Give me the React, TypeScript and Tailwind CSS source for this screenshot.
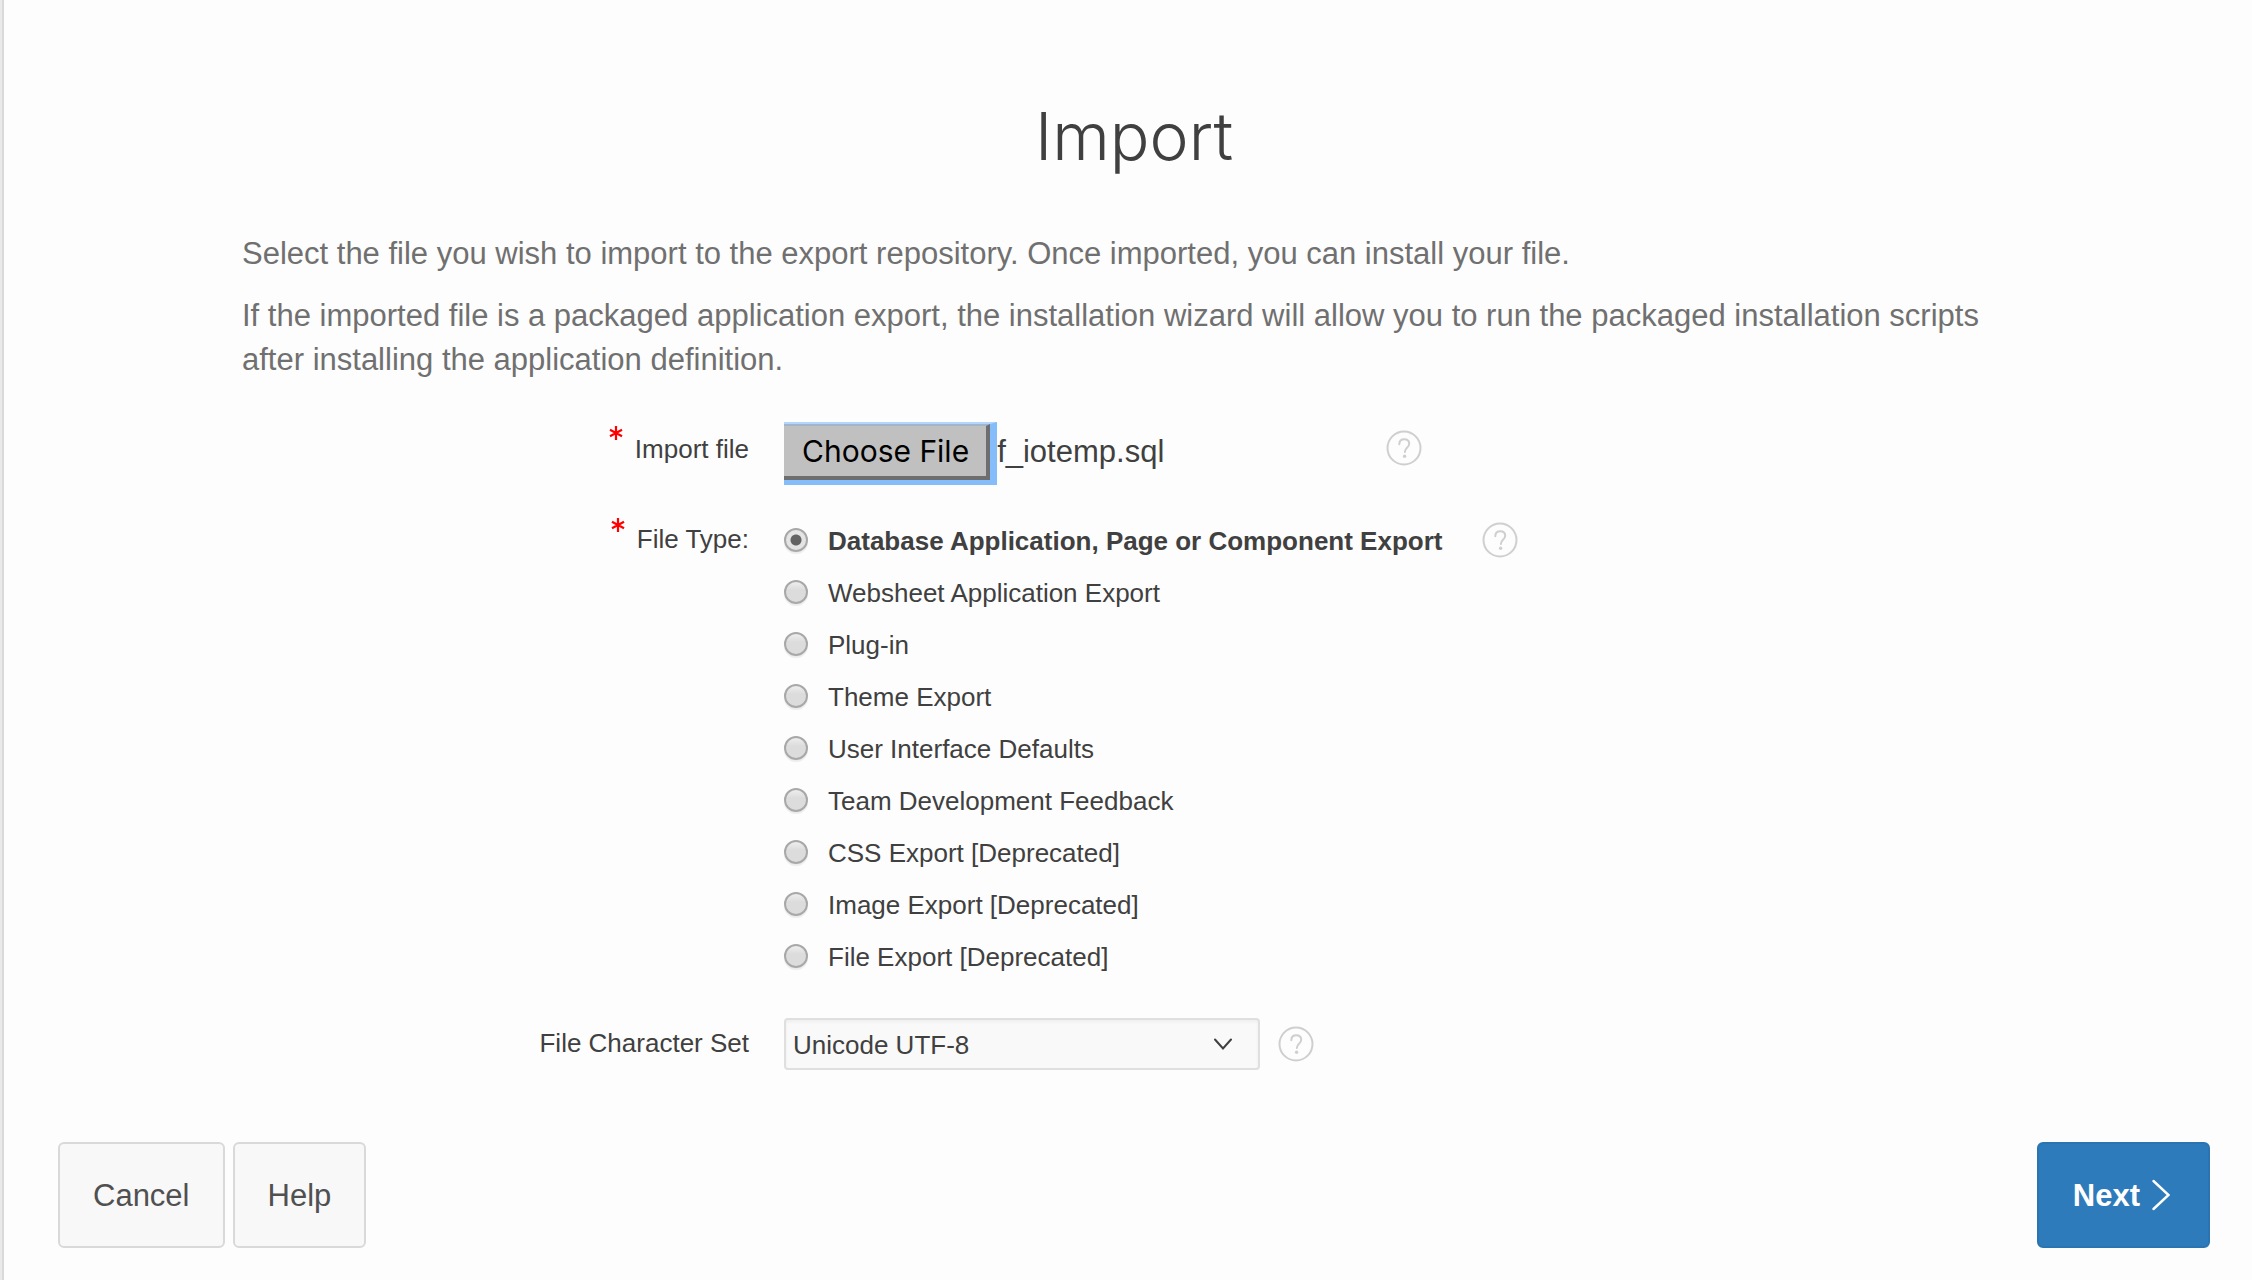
import { useState } from "react";

const fileTypes = [
  "Database Application, Page or Component Export",
  "Websheet Application Export",
  "Plug-in",
  "Theme Export",
  "User Interface Defaults",
  "Team Development Feedback",
  "CSS Export [Deprecated]",
  "Image Export [Deprecated]",
  "File Export [Deprecated]",
];

function HelpButton({ label }: { label: string }) {
  return (
    <button type="button" aria-label={label} className="shrink-0 text-[#cfcfcf]">
      <svg className="size-9" viewBox="0 0 36 36" fill="none" stroke="currentColor" strokeWidth="2">
        <circle cx="18" cy="18" r="16.5" />
        <path
          d="M13.3 14.2c0-3 2.1-4.9 5-4.9s4.9 1.8 4.9 4.5c0 2-1.1 3.1-2.4 4.300-1.2 1.1-1.900 1.900-1.900 3.900"
          strokeLinecap="round"
        />
        <circle cx="18.6" cy="26.3" r="1.7" fill="currentColor" stroke="none" />
      </svg>
    </button>
  );
}

function Required() {
  return (
    <svg
      aria-hidden="true"
      className="mt-1 size-3.5 shrink-0 self-start text-[#ff0000]"
      viewBox="0 0 14 14"
      stroke="currentColor"
      strokeWidth="2.2"
    >
      <path d="M7 0v14M1 3.7l12 6.6M13 3.7L1 10.3" />
    </svg>
  );
}

export default function App() {
  const [fileType, setFileType] = useState(fileTypes[0]);
  const [fileName, setFileName] = useState("f_iotemp.sql");

  return (
    <div className="min-h-screen border-l-2 border-[#e9e9e9] bg-[#fdfdfd] font-['Liberation_Sans',Arial,sans-serif] text-[#404040]">
      <form
        onSubmit={(event) => event.preventDefault()}
        className="flex min-h-screen flex-col justify-between border-l-2 border-[#d9d9d9] pt-24 pr-[42px] pb-8 pl-[54px]"
      >
        <main>
          <h1 className="pt-1 text-center font-['Inter',sans-serif] text-[66px] leading-[72px] font-light">Import</h1>
          <div className="mt-[60px] space-y-[18px] px-[184px] text-[31px] leading-[44px] text-[#707070]">
            <p>Select the file you wish to import to the export repository. Once imported, you can install your file.</p>
            <p>
              If the imported file is a packaged application export, the installation wizard will allow you to run the
              packaged installation scripts after installing the application definition.
            </p>
          </div>

          <div className="mt-10 grid grid-cols-[691px_1fr] gap-x-[35px] text-[26px]">
            <div className="flex h-[62px] justify-end gap-3 leading-[54px]">
              <Required />
              <label htmlFor="import-file">Import file</label>
            </div>
            <div className="flex h-[62px] items-start">
              <input
                id="import-file"
                type="file"
                className="sr-only"
                onChange={(event) => setFileName(event.target.files?.[0]?.name ?? "")}
              />
              <label
                htmlFor="import-file"
                className="flex border-t-2 border-r-[7px] border-b-[5px] border-t-[#b5d6fb] border-r-[#85bdfb] border-b-[#85bdfb]"
              >
                <span className="border-t-2 border-r-4 border-b-4 border-t-[#9fb6cd] border-r-[#6e6e6e] border-b-[#6e6e6e] bg-[#c0c0c0] pr-[17px] pl-[18px] font-['Inter',sans-serif] text-[30px] leading-[50px] text-black">
                  Choose File
                </span>
              </label>
              <span className="w-[389px] text-[31px] leading-[60px]">{fileName}</span>
              <div className="mt-2">
                <HelpButton label="Help for Import file" />
              </div>
            </div>

            <div id="file-type-label" className="mt-[30px] flex justify-end gap-3 leading-[50px]">
              <Required />
              <span>File Type:</span>
            </div>
            <div className="mt-[30px] flex items-start gap-10">
              <div role="radiogroup" aria-labelledby="file-type-label">
                {fileTypes.map((name) => (
                  <label key={name} className="flex h-[52px] items-center gap-5 has-checked:font-bold">
                    <input
                      type="radio"
                      name="file-type"
                      checked={fileType === name}
                      onChange={() => setFileType(name)}
                      className="size-6 shrink-0 appearance-none rounded-full border-2 border-[#a8a8a8] bg-linear-to-b from-[#eeeeee] to-[#dcdcdc] to-40% shadow-[0_2px_1px_#ececec] checked:bg-[radial-gradient(circle,#636363_5px,#e4e4e4_6px)]"
                    />
                    <span className="pt-0.5">{name}</span>
                  </label>
                ))}
              </div>
              <div className="mt-2">
                <HelpButton label="Help for File Type" />
              </div>
            </div>

            <label htmlFor="charset" className="mt-9 text-right leading-[50px]">
              File Character Set
            </label>
            <div className="mt-9 flex items-center gap-[18px]">
              <div className="relative w-[476px]">
                <select
                  id="charset"
                  className="h-[52px] w-full appearance-none rounded border-2 border-[#dfdfdf] bg-[#f9f9f9] pt-0.5 pr-14 pl-[7px] text-[26px] shadow-[inset_0_2px_3px_#efefef]"
                >
                  <option>Unicode UTF-8</option>
                </select>
                <svg
                  className="pointer-events-none absolute top-5 right-7 h-3 w-[18px]"
                  viewBox="0 0 18 12"
                  fill="none"
                  stroke="#404040"
                  strokeWidth="2"
                  strokeLinecap="round"
                >
                  <path d="M1 1.5l8 9L17 1.5" />
                </svg>
              </div>
              <HelpButton label="Help for File Character Set" />
            </div>
          </div>
        </main>

        <footer className="flex justify-between text-[31px] text-[#505050]">
          <div className="flex gap-2">
            <button type="button" className="h-[106px] rounded-md border-2 border-[#d9d9d9] bg-[#f8f8f8] px-[33px] pt-0.5">
              Cancel
            </button>
            <button type="button" className="h-[106px] rounded-md border-2 border-[#d9d9d9] bg-[#f8f8f8] px-[33px] pt-0.5">
              Help
            </button>
          </div>
          <button
            type="submit"
            className="flex h-[106px] items-center gap-3 rounded-md border-2 border-[#2b74b2] bg-[#2d7bbb] pr-[38px] pl-[34px] font-bold text-white"
          >
            <span className="pt-0.5">Next</span>
            <svg
              className="h-8 w-[18px]"
              viewBox="0 0 18 32"
              fill="none"
              stroke="currentColor"
              strokeWidth="2.4"
              strokeLinecap="round"
            >
              <path d="M1.5 2L16.5 16L1.5 30" />
            </svg>
          </button>
        </footer>
      </form>
    </div>
  );
}
